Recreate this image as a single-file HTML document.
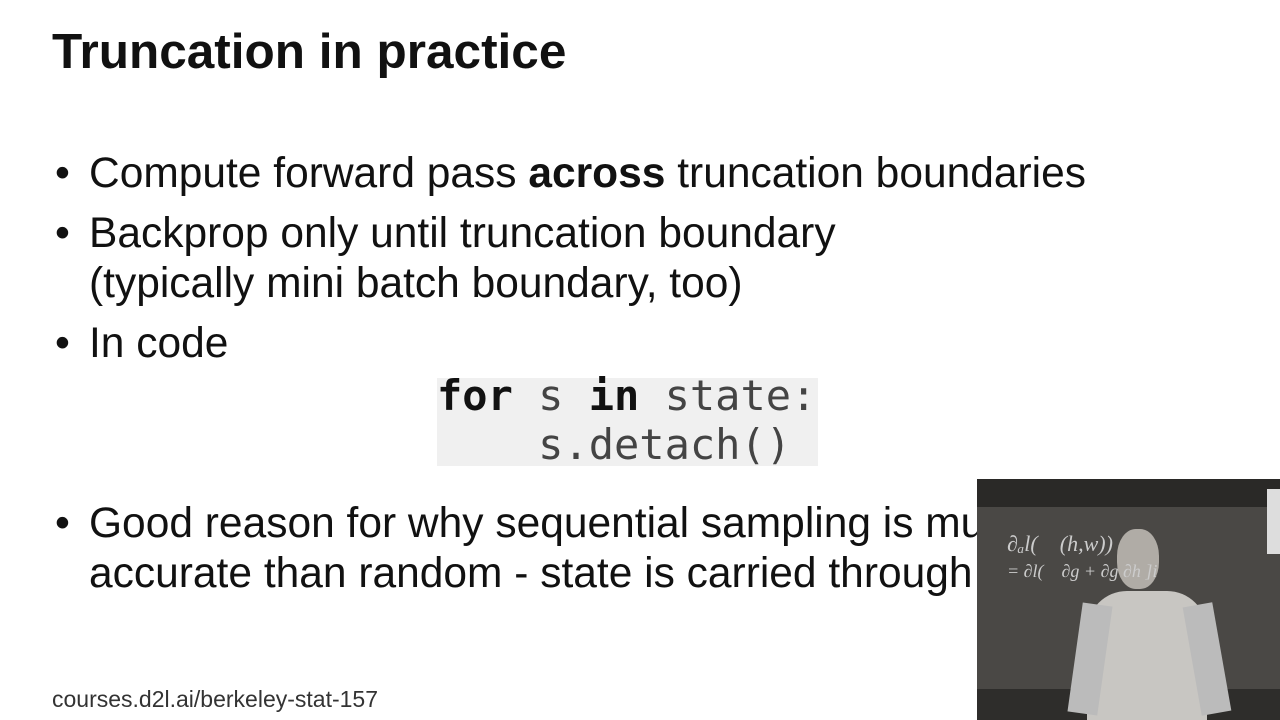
<!DOCTYPE html>
<html><head><style>
body{margin:0;width:1280px;height:720px;background:#fff;position:relative;overflow:hidden;font-family:"Liberation Sans",sans-serif;color:#111}
.t{position:absolute;white-space:nowrap}
h1{position:absolute;left:52px;top:23px;margin:0;font-size:49.5px;font-weight:bold;color:#111}
.b{font-size:42.5px;left:89px}
.dot{font-size:42.5px;left:55px}
.code{position:absolute;left:437px;top:378px;width:381px;height:88px;background:#f0f0f0;}
.code div{position:absolute;left:0;font-family:"DejaVu Sans Mono",monospace;font-size:42px;line-height:46px;color:#444;white-space:pre}
</style></head><body>
<h1>Truncation in practice</h1>
<div class="t dot" style="top:150px">•</div>
<div class="t b" style="top:150px">Compute forward pass <b>across</b> truncation boundaries</div>
<div class="t dot" style="top:210px">•</div>
<div class="t b" style="top:210px">Backprop only until truncation boundary</div>
<div class="t b" style="top:260px">(typically mini batch boundary, too)</div>
<div class="t dot" style="top:320px">•</div>
<div class="t b" style="top:320px">In code</div>
<div class="code"><div style="top:-5px"><b style="color:#111">for</b> s <b style="color:#111">in</b> state:</div><div style="top:44px">    s.detach()</div></div>
<div class="t dot" style="top:500px">•</div>
<div class="t b" style="top:500px">Good reason for why sequential sampling is much more</div>
<div class="t b" style="top:550px">accurate than random - state is carried through</div>
<div class="t" style="left:52px;top:686px;font-size:23px;color:#333">courses.d2l.ai/berkeley-stat-157</div>
<div style="position:absolute;left:977px;top:479px;width:303px;height:241px;background:#4a4845;overflow:hidden">
 <div style="position:absolute;left:0;top:0;width:303px;height:28px;background:#2a2927"></div>
 <div style="position:absolute;left:290px;top:10px;width:13px;height:65px;background:#ddd"></div>
 <div style="position:absolute;left:0;top:210px;width:303px;height:31px;background:#2e2d2b"></div>
 <div style="position:absolute;left:140px;top:50px;width:42px;height:60px;border-radius:45%;background:#b0aca6"></div>
 <div style="position:absolute;left:110px;top:112px;width:120px;height:130px;border-radius:40px 40px 0 0;background:#c8c6c2"></div>
 <div style="position:absolute;left:98px;top:125px;width:30px;height:110px;background:#bbb;transform:rotate(8deg)"></div>
 <div style="position:absolute;left:215px;top:125px;width:30px;height:110px;background:#bbb;transform:rotate(-10deg)"></div>
 <div class="t" style="left:30px;top:52px;font-size:22px;color:#ccc;font-family:'Liberation Serif',serif;font-style:italic">∂ₐl(&nbsp;&nbsp;&nbsp;&nbsp;(h,w))</div>
 <div class="t" style="left:30px;top:82px;font-size:18px;color:#ccc;font-family:'Liberation Serif',serif;font-style:italic">= ∂l(&nbsp;&nbsp;&nbsp;&nbsp;∂g + ∂g ∂h ]i</div>
</div>
</body></html>
